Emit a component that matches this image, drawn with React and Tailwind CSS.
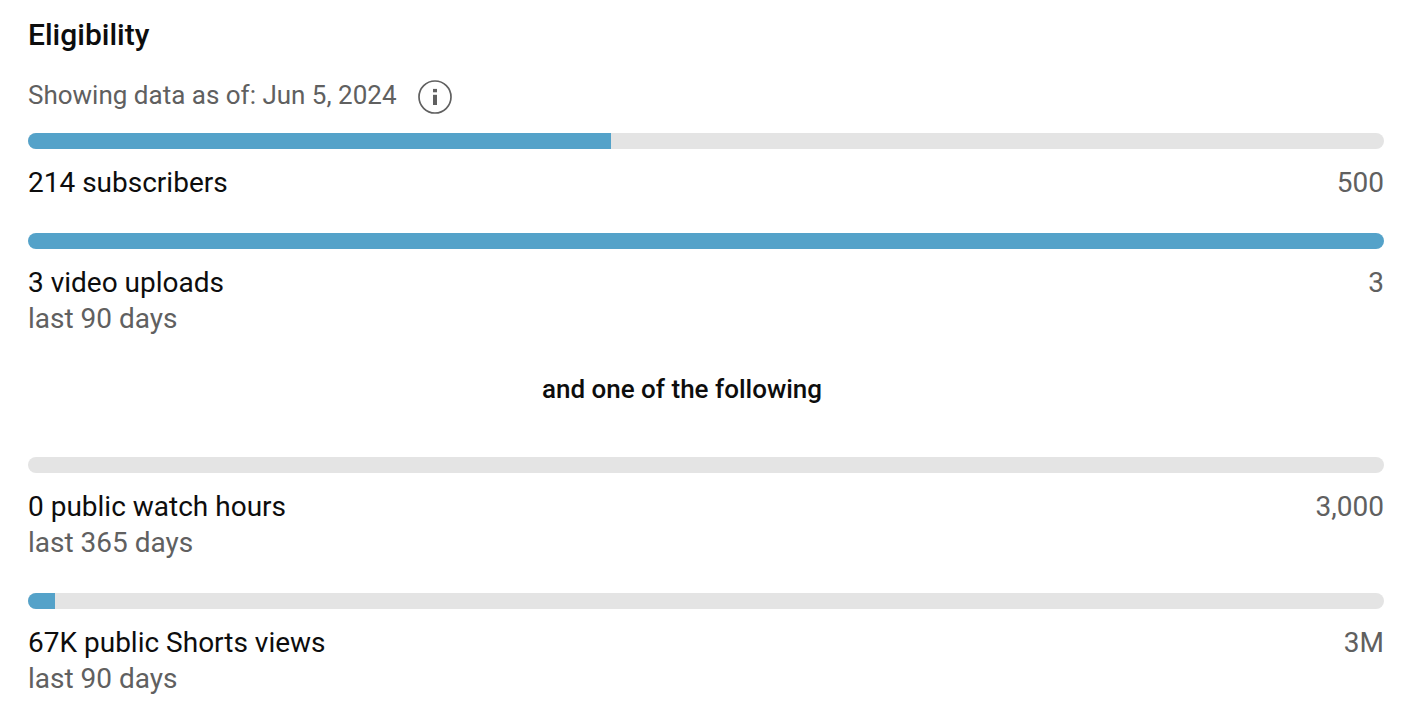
const earlyAccess = [
  { label: "214 subscribers", goal: "500", progress: 43 },
  { label: "3 video uploads", period: "last 90 days", goal: "3", progress: 100 },
];

const watchTime = [
  { label: "0 public watch hours", period: "last 365 days", goal: "3,000", progress: 0 },
  { label: "67K public Shorts views", period: "last 90 days", goal: "3M", progress: 2 },
];

function InfoIcon() {
  return (
    <svg viewBox="0 0 34 34" className="h-[34px] w-[34px] text-[#606060]" fill="none">
      <circle cx="17" cy="17" r="16" stroke="currentColor" strokeWidth="1.7" />
      <path d="M17 14.8v10.2" stroke="currentColor" strokeWidth="4" />
      <path d="M17 8.9v3.4" stroke="currentColor" strokeWidth="4" />
    </svg>
  );
}

function Requirement({ label, period, goal, progress }) {
  return (
    <div>
      <div className="h-4 overflow-hidden rounded-full bg-[#e4e4e4]">
        <div className="h-full bg-[#54a2c9]" style={{ width: `${progress}%` }} />
      </div>
      <div className="mt-4 flex justify-between text-[28px] leading-9">
        <div>
          <p className="text-[#0d0d0d]">{label}</p>
          {period && <p className="text-[#606060]">{period}</p>}
        </div>
        <p className="text-[#606060]">{goal}</p>
      </div>
    </div>
  );
}

export default function App() {
  return (
    <main className="h-[702px] overflow-hidden bg-white pt-[15px] pr-6 pl-7 font-['Roboto',sans-serif]">
      <h2 className="text-[30px] leading-10 font-medium text-[#0d0d0d]">Eligibility</h2>

      <div className="mt-[25px] flex h-[34px] items-center gap-[21px]">
        <p className="pb-1 text-[26px] leading-8 text-[#606060]">Showing data as of: Jun 5, 2024</p>
        <InfoIcon />
      </div>

      <div className="mt-[19px] flex flex-col gap-8">
        {earlyAccess.map((item) => (
          <Requirement key={item.label} {...item} />
        ))}
      </div>

      <p className="mt-[34px] mr-12 text-center text-[26px] leading-9 font-medium text-[#0d0d0d]">
        and one of the following
      </p>

      <div className="mt-[50px] flex flex-col gap-8">
        {watchTime.map((item) => (
          <Requirement key={item.label} {...item} />
        ))}
      </div>
    </main>
  );
}
